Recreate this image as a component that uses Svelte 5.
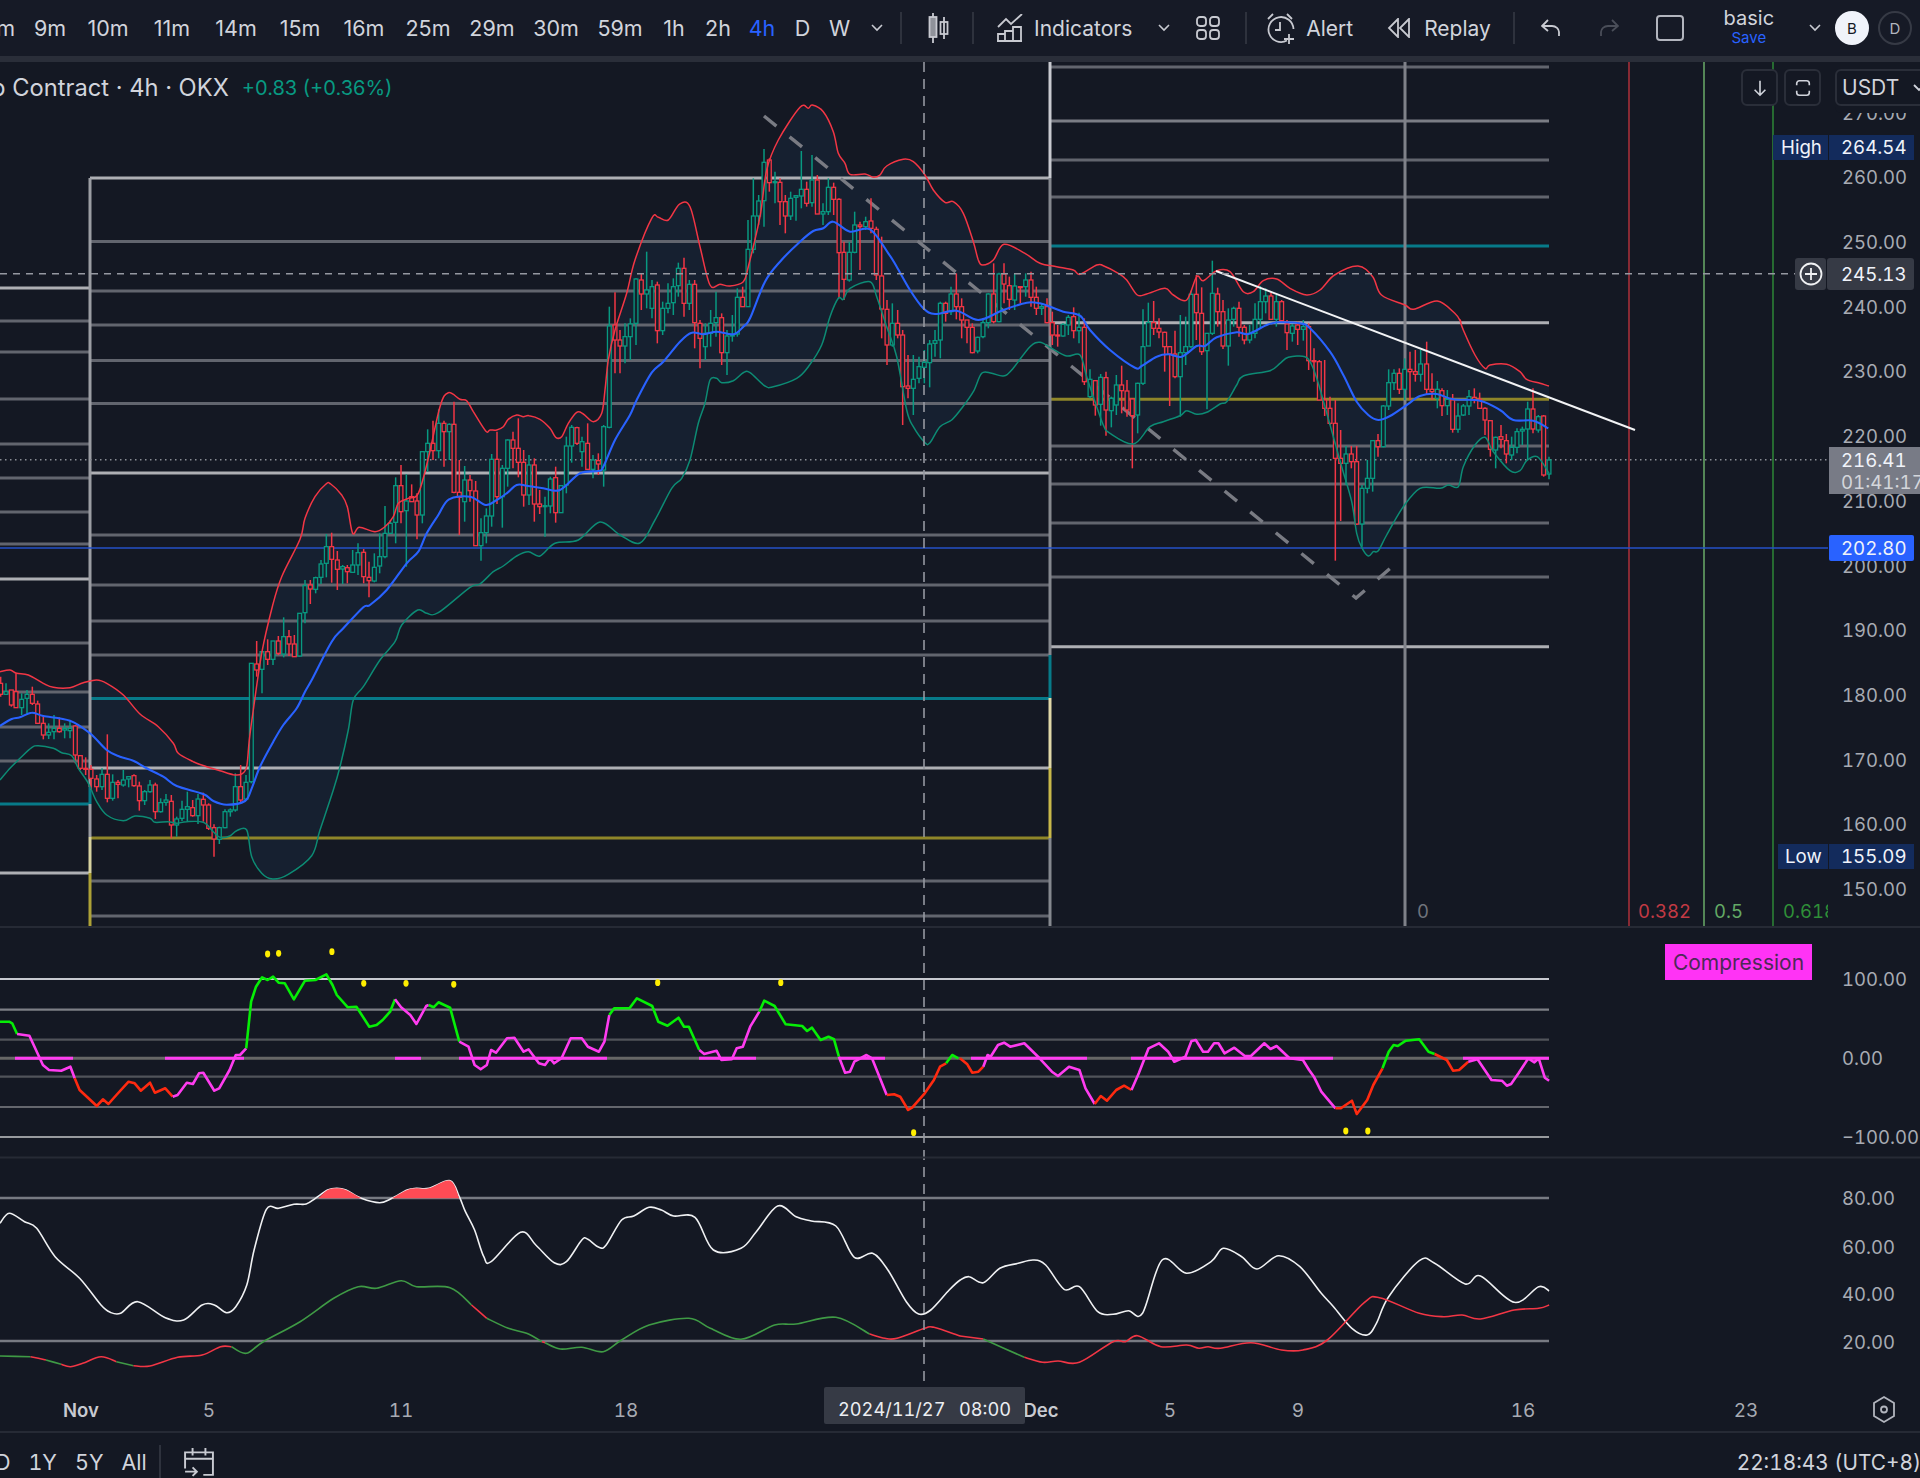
<script>
	const frames = ['5m', '9m', '10m', '11m', '14m', '15m', '16m', '25m', '29m', '30m', '59m', '1h', '2h', '4h', 'D', 'W'];
	const shortFrames = ['1h', '2h', '4h'];
	const tinyFrames = ['D', 'W'];

	// helpers: traced points are stored in the coordinates of the crop they were read from
	const t = (ox, oy, sx, sy, s) =>
		s.trim().split(/\s+/).map((p) => {
			const [x, y] = p.split(',').map(Number);
			return [ox + x / sx, oy + y / sy];
		});
	const pts = (a) => a.map((p) => p[0].toFixed(1) + ',' + p[1].toFixed(1)).join(' ');
	// catmull-rom through the traced points
	const smooth = (a) => {
		let d = `M${a[0][0].toFixed(1)} ${a[0][1].toFixed(1)}`;
		for (let i = 0; i < a.length - 1; i++) {
			const p0 = a[i - 1] || a[i];
			const p1 = a[i];
			const p2 = a[i + 1];
			const p3 = a[i + 2] || p2;
			const c1x = p1[0] + (p2[0] - p0[0]) / 6;
			const c1y = p1[1] + (p2[1] - p0[1]) / 6;
			const c2x = p2[0] - (p3[0] - p1[0]) / 6;
			const c2y = p2[1] - (p3[1] - p1[1]) / 6;
			d += `C${c1x.toFixed(1)} ${c1y.toFixed(1)} ${c2x.toFixed(1)} ${c2y.toFixed(1)} ${p2[0].toFixed(1)} ${p2[1].toFixed(1)}`;
		}
		return d;
	};
	const Z4 = (s) => t(0, 640, 3, 3, s);
	const Z10 = (s) => t(240, 380, 3, 3, s);
	const Z9 = (s) => t(560, 90, 3, 3, s);
	const Z11 = (s) => t(1040, 250, 3, 3, s);
	const Z12 = (s) => t(1300, 320, 3, 3, s);
	const Z3 = (s) => t(1000, 240, 1.704, 3, s);
	const A = (s) => t(0, 930, 1.633, 3, s);
	const B = (s) => t(960, 930, 1.633, 3, s);
	const C = (s) => t(0, 1150, 1.633, 3, s);
	const D = (s) => t(960, 1150, 1.633, 3, s);

	const upper = [
		...Z4('0,95 30,90 50,100 85,105 130,130 160,142 210,143 250,128 290,120 320,130 370,165 420,222 475,260 520,310 535,340 580,365 620,380 660,392 700,404 725,402 740,380 748,300 760,210'),
		...Z10('66,815 97,680 125,590 180,478 195,415 225,350 258,312 272,312 305,345 322,380 338,460 358,442 405,455 435,440 460,410 475,370 505,355 535,340 565,235 600,80 625,38 660,58 680,62 700,95 737,153 750,150 770,150 790,140 805,118 830,105 850,110 867,107 900,118 930,145 947,172 965,170 985,130'),
		...Z9('50,967 70,972 100,995 125,970 135,900 145,810 165,720 200,610 225,510 275,385 295,382 325,390 358,343 390,350 420,470 450,585 480,583 510,588 550,575 565,530 600,380 620,240 655,150 720,52 745,55 757,45 790,65 820,125 835,190 855,220 870,253 915,252 940,262 960,255 980,228 1030,208 1060,215 1095,255 1120,300 1155,337 1180,335 1210,370 1240,455 1255,510 1268,525 1300,510 1332,463 1395,490 1440,520'),
		...Z11('50,50 100,60 120,73 170,45 190,47 235,70 260,90 292,135 320,132 375,115 400,135 440,150 470,80 490,92 530,62 570,65 610,125 640,125 670,92 710,87 750,115 800,135 840,120'),
		...Z3('570,105 610,78 635,110 650,165 690,195 705,208 745,183 775,220 785,245'),
		...Z12('480,0 490,30 525,105 555,145 570,135 620,133 660,155 680,178 720,190 747,198')
	];
	const lower = [
		...Z4('0,420 30,385 60,355 95,323 115,317 160,325 185,338 215,347 235,385 265,430 290,485 320,525 370,542 405,528 450,535 465,547 505,545 530,550 560,545 610,547 640,575 660,592 690,588 710,572 740,570 755,650 785,700 818,717 865,703 935,647 960,570 1000,450 1020,380 1045,270 1060,180 1090,140'),
		...Z10('420,840 465,785 485,735 533,690 560,700 595,698 690,622 720,612 760,575 790,558 830,528 865,515 900,528 945,490 1015,480'),
		[600, 522], [620, 535], [640, 543], [655, 520],
		...Z9('335,1195 365,1165 390,1110 415,1000 435,940 450,870 470,865 485,878 520,872 550,848 570,848 615,888 640,890 710,865 745,830 785,765 810,680 835,625 850,628 870,595 930,575 950,620 980,710 1010,800 1040,960 1060,1010 1095,1058 1110,1058 1140,1010 1175,990 1205,955 1240,905 1265,850 1295,850 1330,858 1355,840 1410,770 1440,757'),
		...Z11('35,295 80,318 120,315 140,380 160,440 190,525 210,550 280,582 330,530 370,515 420,497 440,482 470,493 500,487 540,462 560,455 590,405 610,378 690,362 720,340 745,322'),
		...Z12('15,110 35,135 55,190 100,350 125,440 155,545 170,640 185,682 205,708 220,695 235,692 260,645 310,560 360,505 420,505 445,495 475,500 490,440 525,375 555,352 580,395 630,452 660,452 680,422 712,410 747,460')
	];
	const basis = [
		...Z4('0,258 35,237 60,232 95,218 130,228 210,242 270,280 320,330 360,350 400,362 440,385 490,410 530,438 610,462 640,483 680,494 735,483 755,445 780,380 820,305 850,255 890,205 915,155 935,120'),
		...Z10('275,785 310,745 370,682 390,675 440,630 500,550 535,515 560,460 595,405 627,358 690,350 737,375 770,360 800,340 830,315 860,317 910,325 960,330'),
		...Z9('60,1150 115,1143 130,1130 165,1050 210,975 230,930 275,848 310,815 360,755 395,728 430,733 470,725 520,733 550,710 570,685 615,575 660,515 720,455 760,423 790,415 820,395 870,425 930,418 985,490 1010,530 1050,600 1090,655 1125,672 1190,662 1255,690 1330,660 1400,638 1440,640'),
		...Z11('35,172 70,185 120,197 150,240 210,300 285,353 305,348 350,320 385,313 425,320 470,288 495,288 530,262 590,247 625,252 680,225 715,217 780,220'),
		...Z12('30,25 90,95 130,165 170,245 205,285 235,300 270,288 320,255 360,228 410,222 460,238 540,242 600,270 640,300 700,302 745,325')
	];
	const band = pts([...upper, ...[...lower].reverse()]);

	// candle rows: x colour wickTop bodyTop bodyBottom wickBottom, in crop coordinates
	const parseCandles = (ox, oy, s) =>
		s.trim().split('\n').map((row) => {
			const [x, c, wt, bt, bb, wb] = row.trim().split(' ');
			return {
				x: ox + x / 3,
				up: c === 'g',
				wt: oy + wt / 3,
				bt: oy + bt / 3,
				h: Math.max((bb - bt) / 3, 1),
				wb: oy + wb / 3
			};
		});

	const candles = [
		...parseCandles(0, 640, `2 r 110 130 163 170
18 g 130 155 163 165
34 r 150 150 195 200
48 r 100 155 203 203
65 g 160 178 203 225
81 g 150 163 175 225
97 r 140 163 190 195
113 r 182 192 250 252
130 r 225 250 285 298
146 g 250 277 285 297
162 g 225 265 275 298
178 r 232 265 275 278
194 g 250 265 270 295
210 g 240 265 272 295
226 r 255 258 345 370
241 r 345 347 385 390
257 r 352 385 385 405
273 r 375 388 415 450
290 r 405 417 440 455
306 g 385 403 440 450
322 r 283 403 475 487
338 g 403 427 475 482
354 r 420 427 433 475
370 g 390 420 435 440
386 g 408 410 417 442
402 r 403 407 437 440
418 r 425 438 482 512
434 g 450 455 482 495
450 g 420 435 455 458
466 r 428 435 515 537
482 g 475 488 515 518
498 g 462 480 487 497
514 r 465 484 555 595
530 g 530 537 555 590
546 g 482 508 535 543
562 g 455 500 508 545
578 r 480 503 527 530
594 g 462 477 527 552
610 r 458 478 495 545
626 r 490 495 565 570
642 r 553 563 597 650
658 g 560 563 598 612
675 g 508 515 563 565
691 g 505 510 515 530
706 g 400 440 510 515
722 r 375 440 480 490
738 g 405 427 477 480
754 g 70 70 425 430`),
		...parseCandles(240, 380, `50 r 783 852 870 890
66 g 815 815 868 940
83 r 778 815 838 855
99 g 783 783 838 855
115 r 768 783 820 825
131 g 712 770 822 832
147 r 750 770 792 828
163 r 765 792 830 830
179 g 700 700 828 830
195 g 600 617 698 730
211 r 600 615 627 672
227 g 590 593 628 640
243 g 540 552 592 612
259 g 462 500 550 592
275 r 458 500 538 608
292 r 513 540 568 630
308 g 555 560 567 612
322 r 555 563 575 610
338 g 510 555 577 577
354 g 490 518 555 585
371 r 507 517 590 610
387 r 545 592 602 652
403 g 520 562 603 607
419 g 460 530 558 580
435 g 378 460 530 535
451 g 420 430 460 462
467 g 292 317 427 490
483 r 255 317 395 430
499 g 283 363 392 560
515 r 313 350 365 365
531 r 340 363 405 478
547 g 215 215 405 430
563 g 148 190 215 275
579 r 122 190 212 240
596 g 88 130 212 235
612 r 122 130 155 260
628 g 130 133 155 240
642 r 65 133 337 340
658 r 240 337 352 465
674 g 258 300 365 425
690 r 285 300 332 365
707 r 303 333 497 497
723 g 415 458 497 542
739 g 385 408 458 490
755 g 222 238 408 440
771 r 155 238 350 372
787 g 255 265 350 443
803 g 178 180 265 320
819 r 155 180 205 265
835 r 115 205 247 292
851 r 210 247 345 380
867 g 225 255 345 375
883 r 235 255 372 425
899 r 330 372 380 402
915 g 350 377 378 470
931 g 290 297 378 400
947 r 260 293 398 428
963 g 315 317 398 398
979 g 170 198 315 340
995 g 135 142 198 248
1011 r 140 143 190 195`),
		...parseCandles(560, 90, `66 g 1040 1055 1085 1130
83 r 1000 1060 1138 1140
99 g 1095 1110 1138 1165
115 r 1090 1112 1122 1155
131 g 1005 1010 1140 1190
148 g 650 708 1012 1015
165 r 607 705 750 850
180 r 720 750 768 850
195 g 700 740 768 820
211 g 685 702 740 810
228 g 565 567 700 765
244 r 550 570 612 660
260 g 485 600 612 655
276 g 570 590 655 685
292 r 575 585 722 760
308 g 635 655 722 735
324 g 580 640 655 670
340 g 565 590 638 675
355 g 518 535 587 620
372 r 503 535 640 680
388 g 570 583 640 660
404 r 570 583 698 775
420 r 690 700 745 835
436 g 700 730 770 810
452 g 660 700 730 770
468 g 605 683 698 740
485 r 670 683 788 825
501 g 720 738 788 855
517 g 675 735 735 755
532 g 595 622 732 740
548 r 590 622 650 650
564 g 390 478 650 650
580 g 265 378 478 490
596 g 315 333 378 405
612 g 177 217 332 410
628 r 205 210 278 305
645 g 245 275 278 340
660 r 265 277 335 405
676 r 315 335 378 430
692 g 305 325 378 390
708 g 317 317 322 392
724 g 183 298 318 355
740 r 275 298 340 350
756 g 195 270 338 350
772 r 255 270 372 372
789 g 340 365 372 405
805 g 265 292 365 375
821 r 278 292 328 375
837 r 325 328 488 625
852 r 455 487 568 630
868 g 455 487 570 575
884 g 365 405 487 490
900 r 395 405 410 540
917 g 380 395 410 420
933 r 325 393 415 430
949 r 410 418 555 570
965 r 440 558 657 745
981 r 630 658 765 825
997 g 640 700 765 770
1013 r 660 700 735 745
1028 r 720 735 890 1005
1044 r 795 888 895 925
1060 g 795 868 895 975
1077 g 800 830 865 880
1093 g 780 817 832 880
1109 g 750 762 818 892
1125 g 720 752 760 800
1141 g 635 640 750 805
1157 r 635 640 670 695
1173 g 590 612 665 675
1189 r 550 612 650 688
1205 r 625 650 690 745
1221 r 690 690 712 760
1237 r 700 712 788 790
1253 g 740 742 783 790
1269 g 685 698 740 745
1285 g 610 612 698 715
1301 r 520 612 695 700
1317 g 548 552 695 697
1332 r 520 552 582 640
1348 r 560 587 628 660
1364 g 550 588 630 660
1381 r 590 590 592 640
1397 g 550 570 590 620
1413 r 545 570 622 650
1429 r 590 622 655 675
1445 g 640 650 655 675
1461 r 625 650 698 700
1477 r 665 698 735 765
1493 r 705 735 737 770
1509 g 700 703 738 740
1525 g 675 682 705 735`),
		...parseCandles(1040, 250, `101 r 172 200 242 265
117 g 188 232 242 280
133 r 205 232 395 405
150 g 358 388 440 445
166 r 390 392 465 497
182 g 372 382 463 527
198 r 365 383 480 557
214 g 440 445 482 532
229 g 375 405 465 495
245 r 347 405 422 490
261 r 390 423 480 500
277 r 445 447 497 655
293 g 398 400 495 550
309 g 178 290 400 405
325 g 158 218 288 285
341 r 153 218 235 255
357 r 205 235 246 265
374 r 245 247 290 365
389 r 288 290 312 468
405 r 242 312 380 385
421 g 195 308 380 500
437 g 200 290 308 345
453 g 122 133 290 295
469 r 75 133 188 270
485 r 112 190 305 315
501 g 250 250 302 478
517 g 32 130 250 255
533 r 113 132 185 230
549 r 150 185 288 297
565 g 175 210 288 347
581 g 170 175 208 230
597 r 155 175 232 260
613 r 225 232 270 283
629 g 225 250 270 280
645 g 160 208 250 265
661 g 108 155 208 232
677 g 115 138 155 190
693 r 125 138 208 210
709 g 135 155 208 230
725 r 150 155 212 215
741 r 210 222 248 300
757 g 222 228 250 275
773 r 215 225 238 285`),
		...parseCandles(1300, 320, `10 g 0 20 28 62
26 r 10 20 122 150
42 r 85 122 125 185
58 r 120 125 240 240
74 r 120 240 265 288
90 r 230 265 310 315
106 r 240 310 415 722
122 r 330 415 430 603
138 g 378 402 430 495
154 r 378 402 425 445
170 r 378 425 612 615
186 g 495 505 612 680
202 g 420 475 505 520
218 g 360 362 475 515
234 r 342 362 380 410
250 g 255 258 380 382
266 g 148 188 258 270
282 g 148 160 188 210
298 r 145 160 208 222
314 g 115 148 208 240
330 r 95 148 155 240
346 r 90 155 163 185
362 g 90 132 163 185
380 r 65 132 208 222
396 r 160 208 215 240
412 g 183 208 235 265
426 r 205 212 257 288
442 g 210 238 257 285
458 r 222 240 328 338
474 g 250 288 328 338
490 g 252 258 285 288
507 g 210 230 258 285
523 r 205 232 238 250
539 r 218 238 265 265
555 r 262 265 300 345
571 r 300 302 388 410
587 g 350 352 390 445
603 r 315 350 358 385
619 r 342 362 402 430
635 g 350 382 405 420
651 g 325 335 382 400
667 g 320 328 333 375
683 g 245 267 327 420
699 r 205 267 327 340
715 g 285 290 330 338
731 r 285 288 465 470
747 g 410 420 462 478`)
	];

	// horizontal levels drawn by the fib tools
	const GRAY = '#62656e';
	const WHITE = '#aeafb4';
	const TEAL = '#077a89';
	const OLIVE = '#8f8629';
	const levels = [
		...[[288, WHITE], [321, GRAY], [352, GRAY], [399, GRAY], [444, GRAY], [478, GRAY], [512, GRAY], [544, GRAY], [579, WHITE], [643, GRAY], [692, GRAY], [727, GRAY], [761, GRAY], [804, TEAL], [873, WHITE]].map(([y, c]) => ({ x1: 0, x2: 90, y, c })),
		...[[178, WHITE], [241.5, GRAY], [291, GRAY], [325, GRAY], [360.5, GRAY], [403.5, GRAY], [473, WHITE], [535, GRAY], [585, GRAY], [621, GRAY], [655, GRAY], [698.5, TEAL], [768, WHITE], [838, OLIVE], [881, GRAY], [916, GRAY]].map(([y, c]) => ({ x1: 90, x2: 1050, y, c })),
		...[[67, GRAY], [121, '#7b7d85'], [160, GRAY], [197, GRAY], [246, TEAL], [322.7, WHITE], [399.3, OLIVE], [446, GRAY], [484, GRAY], [523, GRAY], [577, GRAY], [646.7, WHITE]].map(([y, c]) => ({ x1: 1050, x2: 1549, y, c }))
	];
	const posts = [
		{ x: 90, y1: 178, y2: 787, c: '#9b9da3' },
		{ x: 90, y1: 787, y2: 804, c: TEAL },
		{ x: 90, y1: 804, y2: 837, c: '#9b9da3' },
		{ x: 90, y1: 837, y2: 873, c: '#d8d3a0' },
		{ x: 90, y1: 873, y2: 927, c: '#ada137' },
		{ x: 1050, y1: 62, y2: 178, c: '#c8cad0' },
		{ x: 1050, y1: 178, y2: 655, c: '#85888f' },
		{ x: 1050, y1: 655, y2: 698, c: TEAL },
		{ x: 1050, y1: 698, y2: 768, c: '#e0d8a8' },
		{ x: 1050, y1: 768, y2: 838, c: '#c8b84a' },
		{ x: 1050, y1: 838, y2: 927, c: '#85888f' },
		{ x: 1405, y1: 62, y2: 927, c: '#7f8189' }
	];
	const priceTicks = [270, 260, 250, 240, 230, 220, 210, 200, 190, 180, 170, 160, 150].map((p, i) => ({
		y: 112.5 + i * 64.72,
		label: p.toFixed(2)
	}));

	const oscLines = [
		[979, '#c8cad0', 2.2],
		[1009.7, '#7d7f86', 2.2],
		[1039.7, '#50535a', 2.2],
		[1076.7, '#50535a', 2.2],
		[1107, '#64666d', 2.2],
		[1137, '#989a9e', 2.2],
		[1058.3, '#666', 3]
	];
	const squeeze = [[15, 73], [165, 244], [395, 421], [459, 607], [699, 756], [839, 885], [971, 1087], [1131, 1333], [1463, 1549]];

	const PINK = '#ff3cf0';
	const LIME = '#06ee06';
	const HOT = '#ff2a10';
	const cci = [
		[LIME, A('0,275 15,275 20,280 28,312')],
		[PINK, A('28,312 48,317 70,405 80,420 100,422 115,410 122,445')],
		[HOT, A('122,445 130,480 158,528 168,508 177,522 190,495 210,455 220,460 230,482 245,458 253,488 270,475 282,500')],
		[PINK, A('282,500 290,495 305,458 315,462 325,430 332,428 350,482 358,475 375,420 385,375 392,375 402,355')],
		[LIME, A('402,355 410,215 418,170 428,142 437,150 446,140 455,158 465,160 480,208 498,152 515,150 533,133 543,165 550,195 568,232 582,230 603,290 615,285 625,270 637,245 645,208')],
		[PINK, A('645,208 655,232 670,255 680,282 696,228 700,225')],
		[LIME, A('700,225 708,232 716,217 735,233 750,335')],
		[PINK, A('750,335 765,350 775,405 785,418 795,405 802,360 810,368 828,325 840,323 855,365 863,358 880,400 890,405 898,385 905,400 917,385 932,325 950,325 960,350 978,365 987,335 995,255')],
		[LIME, A('995,255 1003,235 1028,235 1040,205 1065,228 1075,275 1090,287 1108,263 1117,290 1125,290 1142,360')],
		[PINK, A('1142,360 1150,372 1170,362 1178,390 1195,388 1203,355 1213,350 1225,290 1240,245')],
		[LIME, A('1240,245 1248,212 1265,228 1283,283 1310,288 1318,303 1326,293 1340,330 1353,320 1362,328 1370,380')],
		[PINK, A('1370,380 1380,428 1388,425 1395,395 1415,375 1424,385 1448,495')],
		[HOT, A('1448,495 1460,493 1470,500 1483,540 1490,532 1510,490 1525,450 1535,410 1545,400')],
		[LIME, A('1545,400 1555,375 1565,385')],
		[HOT, B('0,385 12,403 20,428 30,425 38,410')],
		[PINK, B('38,410 45,375 50,380 62,345 72,338 82,350 105,340 130,385 150,425 160,438 178,410 195,420 205,475 220,522')],
		[HOT, B('220,522 230,498 240,512 255,480 268,467 280,480')],
		[PINK, B('280,480 292,430 308,355 325,340 340,365 350,395 368,380 378,333 385,330 397,365 405,365 415,340 422,340 432,370 448,353 465,378 475,378 497,340 507,357 517,348 538,385 560,390 570,420 578,440 590,485 613,535')],
		[HOT, B('613,535 622,535 640,512 648,552 665,510 675,465 690,415')],
		[LIME, B('690,415 700,365 708,345 715,348 728,332 750,328 765,365 775,372')],
		[HOT, B('775,372 795,390 805,422 815,420 830,395')],
		[PINK, B('830,395 845,388 868,450 885,452 893,467 900,462 912,430 928,385 938,397 945,385 955,443 962,452')]
	];
	const dots = [
		...A('437,72 455,70 542,65 594,160 663,160 741,163 1074,158 1275,158 1492,608'),
		...B('630,603 666,603')
	];

	const rsi = [
		...C('0,220 15,190 40,215 60,235 90,320 130,385 165,465 180,487 197,490 225,455 270,503 300,510 330,465 350,465 370,488 385,470 403,405 415,300 435,178 455,175 480,163 500,162 515,145 535,120 550,115 565,120 590,145 620,158 640,145 665,120 680,115 700,115 735,92 750,140 760,185 775,240 790,320 802,335 850,247 875,285 905,338 925,335 950,270 960,268 978,292 990,285 1015,210 1035,198 1060,172 1080,180 1100,198 1135,202 1165,300 1210,295 1235,245 1270,168 1300,200 1325,213 1365,228 1395,322 1425,310 1450,360 1480,455 1500,492 1520,480 1550,420 1568,390'),
		...D('15,380 38,398 65,355 95,340 120,330 140,345 170,418 195,410 225,485 250,493 275,482 298,490 330,330 370,370 410,335 430,295 460,320 485,357 520,317 555,350 590,430 610,470 640,535 665,555 680,520 700,440 750,332 775,340 825,402 850,378 905,457 945,410 962,423')
	];
	const hotZones = [
		C('520,145 535,120 550,115 565,120 590,145'),
		C('640,145 665,120 680,115 700,115 735,92 750,145')
	];
	const RED = '#f23645';
	const GREEN = '#3f9a45';
	const ma = [
		[GREEN, C('0,618 50,620')],
		[RED, C('50,620 75,630')],
		[GREEN, C('75,630 100,643')],
		[RED, C('100,643 115,650 135,640 165,620 190,635')],
		[GREEN, C('190,635 218,647')],
		[RED, C('218,647 245,648 290,622 330,615 360,590 378,590')],
		[GREEN, C('378,590 402,610 430,575 490,515 545,445 585,410 615,415 655,392 680,410 735,413 770,465')],
		[RED, C('770,465 795,505')],
		[GREEN, C('795,505 830,535 860,550 885,575')],
		[RED, C('885,575 890,578')],
		[GREEN, C('890,578 915,597 950,592 985,605 1015,570 1060,525 1125,505 1160,535 1210,568 1265,525 1300,522 1365,502 1420,552')],
		[RED, C('1420,552 1445,565 1465,565 1510,535 1525,532 1568,558')],
		[RED, D('0,558 38,567')],
		[GREEN, D('38,567 105,622')],
		[RED, D('105,622 135,637 160,633 195,637 250,575 270,575 290,557 328,590 370,585 390,595 405,590 425,595 475,578 525,600 560,600 600,570 660,458 685,443 750,490 790,500 820,495 850,507 905,480 945,475 962,465')]
	];

	const timeLabels = [
		{ x: 81, label: 'Nov', bold: true },
		{ x: 209, label: '5' },
		{ x: 401, label: '11' },
		{ x: 626, label: '18' },
		{ x: 1041, label: 'Dec', bold: true },
		{ x: 1170, label: '5' },
		{ x: 1298, label: '9' },
		{ x: 1523, label: '16' },
		{ x: 1746, label: '23' }
	];
</script>

<div class="page">
	<header class="topbar">
		<div class="frames">
			{#each frames as f, i}
				<span
					class="frame"
					class:active={f === '4h'}
					class:first={i === 0}
					class:narrow={i === 1}
					class:short={shortFrames.includes(f)}
					class:tiny={tinyFrames.includes(f)}>{f}</span>
			{/each}
		</div>
		<svg class="chev more" viewBox="0 0 12 8"><path d="M1 1l5 5 5-5" /></svg>
		<span class="sep sep1"></span>
		<svg class="ico candle-ico" viewBox="0 0 24 30">
			<path d="M7 0v30M18 4v22" />
			<rect x="3.5" y="4" width="7" height="20" fill="#8f929a" />
			<rect x="14.5" y="9" width="7" height="12" />
		</svg>
		<span class="sep sep2"></span>
		<svg class="ico ind-ico" viewBox="0 0 26 28">
			<path d="M1 13l8-8 5 5 11-10" />
			<path d="M1 27v-7h7v7zM8 27v-10h8v10zM16 27v-14h8v14zM0 27h25" />
		</svg>
		<span class="label ind-label">Indicators</span>
		<svg class="chev ind-chev" viewBox="0 0 12 8"><path d="M1 1l5 5 5-5" /></svg>
		<svg class="ico grid-ico" viewBox="0 0 24 24">
			<rect x="1" y="1" width="9" height="9" rx="3" />
			<rect x="14" y="1" width="9" height="9" rx="3" />
			<rect x="1" y="14" width="9" height="9" rx="3" />
			<rect x="14" y="14" width="9" height="9" rx="3" />
		</svg>
		<span class="sep sep3"></span>
		<svg class="ico alert-ico" viewBox="0 0 32 32">
			<path d="M22 28.5A12.5 12.5 0 1 1 28.5 17" />
			<path d="M15 10v8h-5M3 7l5-5M27 7l-5-5M24 22v10M19 27h10" />
		</svg>
		<span class="label alert-label">Alert</span>
		<svg class="ico replay-ico" viewBox="0 0 24 20">
			<path d="M11 1L2 10l9 9zM22 1l-9 9 9 9z" />
		</svg>
		<span class="label replay-label">Replay</span>
		<span class="sep sep4"></span>
		<svg class="ico undo-ico" viewBox="0 0 20 18">
			<path d="M7 1L1 7l6 5M1 7h10c4 0 7 3 7 6v4" />
		</svg>
		<svg class="ico redo-ico" viewBox="0 0 20 18">
			<path d="M13 1l6 6-6 5M19 7H9c-4 0-7 3-7 6v4" />
		</svg>
		<span class="square"></span>
		<div class="layout-name">
			<span>basic</span>
			<span class="save">Save</span>
		</div>
		<svg class="chev name-chev" viewBox="0 0 12 8"><path d="M1 1l5 5 5-5" /></svg>
		<span class="avatar solid">B</span>
		<span class="avatar">D</span>
	</header>
	<div class="divider"></div>

	<main class="chart">
		<svg class="plot" width="1920" height="1369" viewBox="0 62 1920 1369">
			<polygon points={band} fill="#1a2a3f" fill-opacity="0.48" />

			{#each levels as l}
				<line x1={l.x1} x2={l.x2} y1={l.y} y2={l.y} stroke={l.c} stroke-width="3" />
			{/each}
			{#each posts as p}
				<line x1={p.x} x2={p.x} y1={p.y1} y2={p.y2} stroke={p.c} stroke-width="3" />
			{/each}

			<!-- fib time zones -->
			<line x1="1629" x2="1629" y1="62" y2="927" stroke="#b9323c" stroke-width="1.4" />
			<line x1="1704" x2="1704" y1="62" y2="927" stroke="#70b56e" stroke-width="1.4" />
			<line x1="1773" x2="1773" y1="62" y2="927" stroke="#2f8f38" stroke-width="1.4" />
			<text class="fib" x="1417" y="918" fill="#70737c">0</text>
			<text class="fib" x="1638" y="918" fill="#c23a44">0.382</text>
			<text class="fib" x="1714" y="918" fill="#63a865">0.5</text>
			<text class="fib" x="1783" y="918" fill="#2f8f38">0.618</text>

			<polyline points="764,116 1356,598 1393,566" fill="none" stroke="#797b83" stroke-width="3.4" stroke-dasharray="16 17" />

			<line x1="0" x2="1829" y1="548" y2="548" stroke="#2450c8" stroke-width="1.6" />
			<line x1="0" x2="1829" y1="459.7" y2="459.7" stroke="#8a8d95" stroke-width="1.4" stroke-dasharray="1.5 3.5" />

			{#each candles as k}
				<line x1={k.x} x2={k.x} y1={k.wt} y2={k.wb} stroke={k.up ? '#089981' : RED} stroke-width="1.5" />
				<rect x={k.x - 1.9} y={k.bt} width="3.8" height={k.h} fill="#14202c" stroke={k.up ? '#089981' : RED} stroke-width="1.3" />
			{/each}

			<path d={smooth(upper)} class="series" stroke="#f23645" stroke-width="1.5" />
			<path d={smooth(lower)} class="series" stroke="#0d8b74" stroke-width="1.5" />
			<path d={smooth(basis)} class="series" stroke="#2962ff" stroke-width="2.1" />

			<line x1="1216" y1="271" x2="1635" y2="430" stroke="#f2f3f5" stroke-width="2" />

			<!-- squeeze oscillator -->
			{#each oscLines as [y, c, w]}
				<line x1="0" x2="1549" y1={y} y2={y} stroke={c} stroke-width={w} />
			{/each}
			{#each squeeze as [a, b]}
				<line x1={a} x2={b} y1="1058.3" y2="1058.3" stroke={PINK} stroke-width="3" />
			{/each}
			{#each cci as [c, seg]}
				<polyline points={pts(seg)} class="series" stroke={c} stroke-width="2.6" />
			{/each}
			{#each dots as d}
				<ellipse cx={d[0]} cy={d[1]} rx="2.6" ry="3.4" fill="#ffee00" />
			{/each}

			<!-- rsi -->
			<line x1="0" x2="1549" y1="1198" y2="1198" stroke="#777a82" stroke-width="2.4" />
			<line x1="0" x2="1549" y1="1341" y2="1341" stroke="#777a82" stroke-width="2.4" />
			<path d={smooth(rsi)} class="series" stroke="#f0f1f3" stroke-width="1.6" />
			{#each hotZones as z}
				<path d={smooth(z) + 'Z'} fill="#ff4b55" />
			{/each}
			{#each ma as [c, seg]}
				<path d={smooth(seg)} class="series" stroke={c} stroke-width="1.6" />
			{/each}

			<!-- crosshair -->
			<line x1="0" x2="1795" y1="273.7" y2="273.7" stroke="#9598a1" stroke-width="1.6" stroke-dasharray="7 6" />
			<line x1="924" x2="924" y1="62" y2="1387" stroke="#9598a1" stroke-width="1.6" stroke-dasharray="10 7" />

			<!-- pane borders -->
			<rect x="0" y="926" width="1920" height="2" fill="#262a35" />
			<rect x="0" y="1156.5" width="1920" height="2" fill="#262a35" />

			<!-- price scale -->
			<rect x="1828" y="62" width="92" height="864" fill="#141823" />
			{#each priceTicks as p}
				<text class="axis" x="1842" y={p.y}>{p.label}</text>
			{/each}
			<rect x="1773" y="135" width="55" height="25" fill="#132b5c" />
			<rect x="1829" y="135" width="85" height="25" fill="#132b5c" />
			<text class="tag" x="1781" y="147.5">High</text>
			<text class="tag" x="1841" y="147.5">264.54</text>
			<rect x="1778" y="844" width="50" height="25" fill="#132b5c" />
			<rect x="1829" y="844" width="85" height="25" fill="#132b5c" />
			<text class="tag" x="1785" y="856.5">Low</text>
			<text class="tag" x="1841" y="856.5">155.09</text>

			<rect x="1795" y="258" width="31" height="32" rx="3" fill="#363a45" />
			<rect x="1827" y="258" width="87" height="32" rx="3" fill="#363a45" />
			<circle cx="1811" cy="274" r="10.5" fill="none" stroke="#f0f1f3" stroke-width="1.8" />
			<path d="M1811 268v12M1805 274h12" stroke="#f0f1f3" stroke-width="1.8" />
			<text class="tag" x="1841" y="274">245.13</text>

			<rect x="1829" y="447" width="91" height="47" fill="#787b86" />
			<text class="tag" x="1841" y="460">216.41</text>
			<text class="tag soft" x="1841" y="482">01:41:17</text>

			<rect x="1829" y="535" width="85" height="26" rx="2" fill="#2962ff" />
			<text class="tag" x="1841" y="548">202.80</text>

			<rect x="1665" y="944" width="147" height="36" fill="#ff33f5" />
			<text class="squeeze-tag" x="1738.5" y="962">Compression</text>

			<text class="axis" x="1842" y="979">100.00</text>
			<text class="axis" x="1842" y="1058">0.00</text>
			<text class="axis" x="1842" y="1137">−100.00</text>
			<text class="axis" x="1842" y="1198">80.00</text>
			<text class="axis" x="1842" y="1246.7">60.00</text>
			<text class="axis" x="1842" y="1294">40.00</text>
			<text class="axis" x="1842" y="1341.5">20.00</text>

			<!-- time scale -->
			{#each timeLabels as l}
				<text class="time" class:bold={l.bold} x={l.x} y="1410">{l.label}</text>
			{/each}
			<rect x="824" y="1387" width="201" height="37" rx="2" fill="#363a45" />
			<text class="stamp" x="838" y="1409">2024/11/27</text>
			<text class="stamp" x="959" y="1409">08:00</text>
			<path d="M1884 1397l10 6v13l-10 6-10-6v-13z" fill="none" stroke="#b2b5be" stroke-width="1.8" />
			<circle cx="1884" cy="1409.5" r="3" fill="none" stroke="#b2b5be" stroke-width="1.8" />
		</svg>

		<div class="legend">
			<span>Perp Contract · 4h · OKX</span>
			<span class="delta">+0.83 (+0.36%)</span>
		</div>

		<div class="scale-tools">
			<span class="tool">
				<svg viewBox="0 0 16 20"><path d="M8 2v16M2 12l6 6 6-6" /></svg>
			</span>
			<span class="tool">
				<svg viewBox="0 0 20 20"><path d="M3 7V5a3 3 0 0 1 3-3h8a3 3 0 0 1 3 3v2M3 13v2a3 3 0 0 0 3 3h8a3 3 0 0 0 3-3v-2" /></svg>
			</span>
			<span class="tool currency">
				USDT
				<svg class="currency-chev" viewBox="0 0 12 8"><path d="M1 1l5 5 5-5" /></svg>
			</span>
		</div>
	</main>

	<footer class="bottombar">
		<span class="range ytd">YTD</span>
		<span class="range">1Y</span>
		<span class="range">5Y</span>
		<span class="range">All</span>
		<span class="sep foot-sep"></span>
		<svg class="ico cal-ico" viewBox="0 0 28 28">
			<path d="M1 20V5h26v21h-9M1 11h26M8 1v7M20 1v7M1 23h11M8 19l4 4-4 4" />
		</svg>
		<span class="clock">22:18:43 (UTC+8)</span>
	</footer>
</div>

<style>
	:global(body) {
		background: #141823;
	}

	.page {
		width: 1920px;
		height: 1478px;
		overflow: hidden;
		display: flex;
		flex-direction: column;
		background: #141823;
		color: #d1d4dc;
		font-family: Inter, 'Liberation Sans', sans-serif;
	}

	.topbar {
		height: 56px;
		flex: none;
		display: flex;
		align-items: center;
		background: #161a26;
		font-size: 21.5px;
	}

	.frames {
		display: flex;
		margin-left: -40px;
	}

	.frame {
		flex: none;
		width: 64px;
		box-sizing: border-box;
		text-align: center;
	}

	.frame.first {
		text-align: right;
		padding-right: 9px;
	}

	.frame.narrow {
		width: 52px;
	}

	.frame.short {
		width: 44px;
	}

	.frame.tiny {
		width: 37px;
	}

	.frame.active {
		color: #2962ff;
	}

	.sep {
		width: 2px;
		height: 32px;
		background: #2e323d;
		flex: none;
	}

	.ico {
		flex: none;
		fill: none;
		stroke: #c8cad1;
		stroke-width: 1.8;
	}

	.chev {
		flex: none;
		width: 12px;
		height: 8px;
		fill: none;
		stroke: #c8cad1;
		stroke-width: 1.6;
	}

	.label {
		font-size: 21px;
		flex: none;
	}

	.more { margin-left: 13px; }
	.sep1 { margin-left: 17px; }
	.candle-ico { width: 24px; height: 30px; margin-left: 24px; }
	.sep2 { margin-left: 22px; }
	.ind-ico { width: 26px; height: 28px; margin-left: 23px; }
	.ind-label { margin-left: 11px; }
	.ind-chev { margin-left: 26px; }
	.grid-ico { width: 24px; height: 24px; margin-left: 26px; }
	.sep3 { margin-left: 25px; }
	.alert-ico { width: 32px; height: 32px; margin-left: 18px; }
	.alert-label { margin-left: 9px; }
	.replay-ico { width: 24px; height: 20px; margin-left: 34px; }
	.replay-label { margin-left: 13px; }
	.sep4 { margin-left: 22px; }
	.undo-ico { width: 20px; height: 18px; margin-left: 26px; }
	.redo-ico { width: 20px; height: 18px; margin-left: 38px; stroke: #4a4e59; }

	.square {
		flex: none;
		width: 28px;
		height: 26px;
		margin-left: 37px;
		border: 2px solid #b2b5be;
		border-radius: 4px;
		box-sizing: border-box;
	}

	.layout-name {
		flex: none;
		width: 80px;
		margin-left: 25px;
		display: flex;
		flex-direction: column;
		align-items: center;
		font-size: 20px;
		line-height: 20px;
	}

	.save {
		font-size: 15px;
		color: #2962ff;
	}

	.name-chev { margin-left: 20px; }

	.avatar {
		flex: none;
		width: 34px;
		height: 34px;
		margin-left: 9px;
		box-sizing: border-box;
		border: 2px solid #363a45;
		border-radius: 50%;
		display: flex;
		align-items: center;
		justify-content: center;
		font-size: 15px;
		color: #b2b5be;
	}

	.avatar.solid {
		margin-left: 14px;
		background: #f0f3fa;
		border-color: #f0f3fa;
		color: #131722;
	}

	.divider {
		height: 6px;
		flex: none;
		background: #2a2e39;
	}

	.chart {
		position: relative;
		height: 1369px;
		flex: none;
	}

	.plot {
		display: block;
	}

	.series {
		fill: none;
		stroke-linejoin: round;
	}

	.axis,
	.time,
	.stamp,
	.tag,
	.fib,
	.squeeze-tag {
		font-family: Inter, 'Liberation Sans', sans-serif;
		font-variant-numeric: tabular-nums;
		dominant-baseline: central;
	}

	.axis {
		font-size: 18.5px;
		fill: #a8abb3;
	}

	.fib {
		font-size: 18.5px;
		dominant-baseline: auto;
	}

	.time {
		font-size: 19px;
		fill: #a8abb3;
		text-anchor: middle;
	}

	.time.bold {
		font-size: 18.5px;
		font-weight: 600;
		fill: #c8cad1;
	}

	.stamp {
		font-size: 18.2px;
		fill: #eceef2;
	}

	.tag {
		font-size: 18.7px;
		fill: #f0f3fa;
	}

	.tag.soft {
		fill: #d4d6db;
	}

	.squeeze-tag {
		font-size: 21px;
		fill: #4d2a58;
		text-anchor: middle;
	}

	.legend {
		position: absolute;
		left: -47px;
		top: 12px;
		display: flex;
		gap: 13px;
		align-items: center;
		font-size: 23.7px;
		line-height: 28px;
	}

	.delta {
		font-size: 20px;
		color: #089981;
	}

	.scale-tools {
		position: absolute;
		left: 1741px;
		top: 7px;
		display: flex;
	}

	.tool {
		box-sizing: border-box;
		width: 37px;
		height: 37px;
		margin-right: 6px;
		display: flex;
		align-items: center;
		justify-content: center;
		border: 2px solid #2a2e39;
		border-radius: 6px;
		background: #141823;
	}

	.tool svg {
		width: 18px;
		height: 18px;
		fill: none;
		stroke: #d1d4dc;
		stroke-width: 1.8;
	}

	.currency {
		width: 100px;
		margin-left: 8px;
		margin-right: 0;
		justify-content: flex-start;
		padding-left: 5px;
		font-size: 21px;
		box-shadow: 0 7px 0 #141823;
	}

	.tool svg.currency-chev {
		flex: none;
		width: 12px;
		height: 8px;
		margin-left: 14px;
	}

	.bottombar {
		flex: 1;
		display: flex;
		align-items: center;
		border-top: 2px solid #262a35;
		padding-top: 12px;
		box-sizing: border-box;
		font-size: 21.5px;
		font-variant-numeric: tabular-nums;
	}

	.range {
		flex: none;
		padding: 0 9px;
	}

	.ytd {
		margin-left: -43px;
	}

	.foot-sep {
		margin-left: 3px;
		height: 34px;
	}

	.cal-ico {
		width: 30px;
		height: 30px;
		margin-left: 23px;
	}

	.clock {
		margin-left: auto;
		margin-right: -1px;
		font-size: 20.8px;
	}
</style>
